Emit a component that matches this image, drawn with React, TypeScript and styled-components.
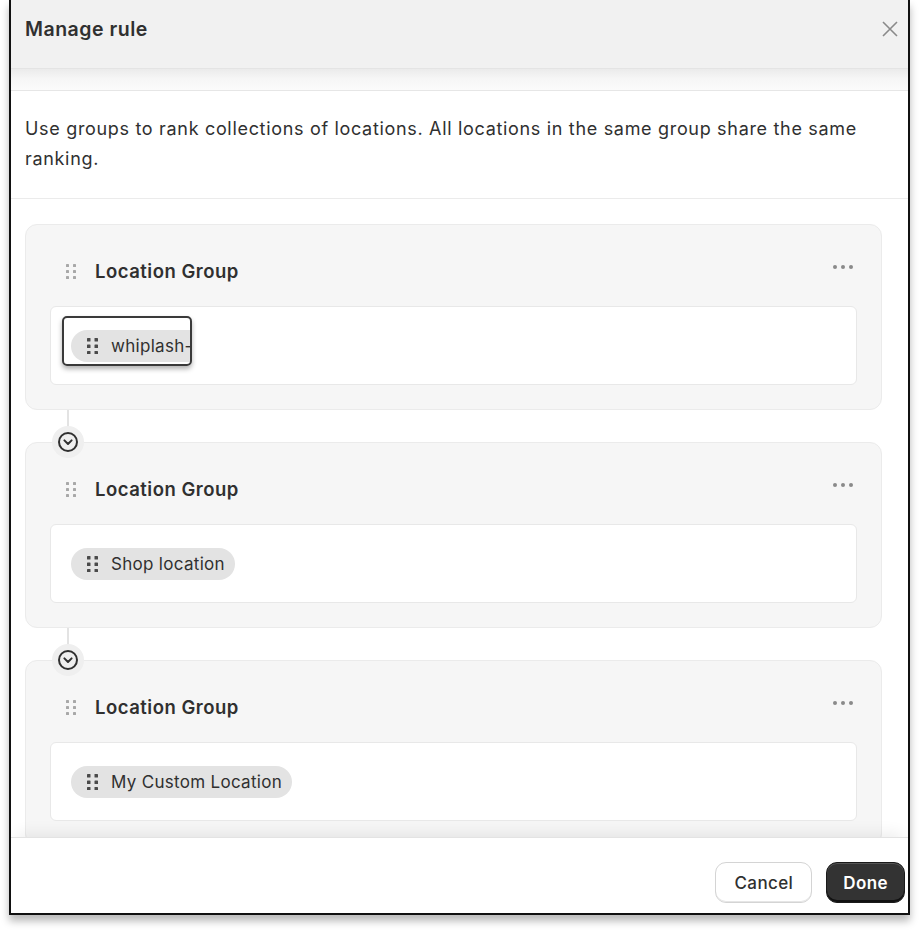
import styled, { createGlobalStyle } from "styled-components";

const GlobalStyle = createGlobalStyle`
  html, body {
    margin: 0;
    padding: 0;
    background: #ffffff;
    font-family: Inter, "Noto Sans", "Liberation Sans", sans-serif;
    color: #303030;
  }
  * { box-sizing: border-box; }
`;

const Page = styled.div`
  width: 919px;
  height: 933px;
  padding-left: 9px;
`;

const Modal = styled.div`
  width: 901px;
  height: 915px;
  border: 2px solid #111;
  border-top: none;
  background: #fff;
  display: flex;
  flex-direction: column;
  box-shadow: 0 6px 8px rgba(0, 0, 0, 0.28);
  overflow: hidden;
`;

const Header = styled.div`
  height: 68px;
  flex: none;
  background: #f1f1f1;
  display: flex;
  align-items: center;
  justify-content: space-between;
  padding: 0 6px 10px 14px;
`;

const Title = styled.h2`
  margin: 0;
  font-size: 19.5px;
  font-weight: 600;
  letter-spacing: 0.5px;
  color: #303030;
`;

const CloseButton = styled.button`
  border: none;
  background: none;
  padding: 0;
  width: 24px;
  height: 24px;
  display: flex;
  align-items: center;
  justify-content: center;
  color: #8a8a8a;
`;

const ShadeBand = styled.div`
  height: 23px;
  flex: none;
  background: linear-gradient(#ebebeb, #f6f6f6 45%, #fbfbfb);
  border-top: 1px solid #e4e4e4;
  border-bottom: 1px solid #e6e6e6;
`;

const Description = styled.p`
  margin: 0;
  flex: none;
  padding: 23px 40px 24px 14px;
  font-size: 18px;
  letter-spacing: 0.68px;
  line-height: 30px;
  color: #303030;
  border-bottom: 1px solid #ebebeb;
`;

const ScrollArea = styled.div`
  flex: 1;
  min-height: 0;
  overflow: hidden;
  padding: 25px 26px 0 14px;
`;

const Card = styled.div`
  background: #f6f6f6;
  border: 1px solid #ebebeb;
  border-radius: 12px;
  padding: 24px;
`;

const CardHeader = styled.div`
  height: 44px;
  display: flex;
  align-items: center;
  padding-left: 16px;
  margin-bottom: 13px;
`;

const CardTitle = styled.span`
  font-size: 18.5px;
  font-weight: 600;
  letter-spacing: 0.5px;
  color: #303030;
  margin-left: 19px;
  flex: 1;
`;

const MoreButton = styled.div`
  display: flex;
  gap: 3.5px;
  margin-right: 4px;
  margin-top: -8px;
  span {
    width: 4.5px;
    height: 4.5px;
    border-radius: 50%;
    background: #8a8a8a;
  }
`;

const DropZone = styled.div`
  background: #fff;
  border: 1px solid #e8e8e8;
  border-radius: 6px;
  height: 79px;
  display: flex;
  align-items: center;
  padding: 0 20px;
`;

const ChipSlot = styled.div`
  position: relative;
  display: flex;
`;

const Chip = styled.div<{ $clipped?: boolean }>`
  display: inline-flex;
  align-items: center;
  height: 32px;
  padding: 0 10px 0 16px;
  background: #e3e3e3;
  border-radius: ${(p) => (p.$clipped ? "16px 0 0 16px" : "16px")};
  font-size: 17px;
  letter-spacing: 0.3px;
  color: #303030;
  white-space: nowrap;
  overflow: hidden;
  max-width: ${(p) => (p.$clipped ? "120px" : "none")};
  margin-top: 1px;
  svg { flex: none; }
`;

const ChipLabel = styled.span`
  margin-left: 13px;
`;

const DragFrame = styled.div`
  position: absolute;
  left: -9px;
  top: -13px;
  width: 130px;
  height: 50px;
  border: 2.5px solid #3a3a3a;
  border-radius: 5px;
  box-shadow: 0 3px 5px rgba(0, 0, 0, 0.3);
  pointer-events: none;
`;

const Connector = styled.div`
  position: relative;
  height: 32px;
  margin-left: 42px;
  border-left: 2px solid #e3e3e3;
  width: 2px;
`;

const ConnectorBadge = styled.div`
  position: absolute;
  left: -17px;
  top: 16px;
  width: 32px;
  height: 32px;
  border-radius: 50%;
  background: #efefef;
  display: flex;
  align-items: center;
  justify-content: center;
  z-index: 1;
`;

const Footer = styled.div`
  flex: none;
  height: 76px;
  border-top: 1px solid #e3e3e3;
  box-shadow: 0 -10px 14px -6px rgba(0, 0, 0, 0.07);
  display: flex;
  justify-content: flex-end;
  align-items: flex-start;
  gap: 14px;
  padding: 24px 3px 0 0;
  background: #fff;
  position: relative;
`;

const Button = styled.button<{ $primary?: boolean }>`
  height: 41px;
  padding: 0 ${(p) => (p.$primary ? "16px" : "18px")};
  font-family: inherit;
  font-size: 17px;
  letter-spacing: 0.4px;
  font-weight: ${(p) => (p.$primary ? 600 : 450)};
  border-radius: 11px;
  border: ${(p) => (p.$primary ? "1px solid #1a1a1a" : "1px solid #d4d4d4")};
  background: ${(p) => (p.$primary ? "#333333" : "#ffffff")};
  color: ${(p) => (p.$primary ? "#ffffff" : "#303030")};
  box-shadow: ${(p) =>
    p.$primary
      ? "inset 0 -2px 0 #111, inset 0 1px 0 #555"
      : "inset 0 -1px 0 #e6e6e6"};
`;

const DragDots = ({ color, size }: { color: string; size: number }) => (
  <svg width={size * 2 + 4} height={size * 3 + 6} viewBox={`0 0 ${size * 2 + 4} ${size * 3 + 6}`}>
    {[0, 1, 2].map((r) =>
      [0, 1].map((c) => (
        <rect
          key={`${r}-${c}`}
          x={c * (size + 4)}
          y={r * (size + 3)}
          width={size}
          height={size}
          rx={0.6}
          fill={color}
        />
      ))
    )}
  </svg>
);

const ChevronCircle = () => (
  <svg width="22" height="22" viewBox="0 0 22 22" fill="none">
    <circle cx="11" cy="11" r="9" stroke="#303030" strokeWidth="2" />
    <path d="M7.4 9.4 11 13l3.6-3.6" stroke="#303030" strokeWidth="2" strokeLinecap="round" strokeLinejoin="round" />
  </svg>
);

const CloseIcon = () => (
  <svg width="18" height="18" viewBox="0 0 18 18">
    <path d="M2 2l14 14M16 2 2 16" stroke="#8a8a8a" strokeWidth="1.6" />
  </svg>
);

const groups = [
  { location: "whiplash-", dragging: true },
  { location: "Shop location" },
  { location: "My Custom Location" },
];

const App = () => {
  return (
    <Page>
      <GlobalStyle />
      <Modal>
        <Header>
          <Title>Manage rule</Title>
          <CloseButton aria-label="Close">
            <CloseIcon />
          </CloseButton>
        </Header>
        <ShadeBand />
        <Description>
          Use groups to rank collections of locations. All locations in the same group share the same
          ranking.
        </Description>
        <ScrollArea>
          {groups.map((g, i) => (
            <div key={g.location}>
              {i > 0 && (
                <Connector>
                  <ConnectorBadge>
                    <ChevronCircle />
                  </ConnectorBadge>
                </Connector>
              )}
              <Card>
                <CardHeader>
                  <DragDots color="#a8a8a8" size={3} />
                  <CardTitle>Location Group</CardTitle>
                  <MoreButton>
                    <span />
                    <span />
                    <span />
                  </MoreButton>
                </CardHeader>
                <DropZone>
                  <ChipSlot>
                    <Chip $clipped={g.dragging}>
                      <DragDots color="#4a4a4a" size={3.5} />
                      <ChipLabel>{g.location}</ChipLabel>
                    </Chip>
                    {g.dragging && <DragFrame />}
                  </ChipSlot>
                </DropZone>
              </Card>
            </div>
          ))}
        </ScrollArea>
        <Footer>
          <Button>Cancel</Button>
          <Button $primary>Done</Button>
        </Footer>
      </Modal>
    </Page>
  );
};

export default App;
